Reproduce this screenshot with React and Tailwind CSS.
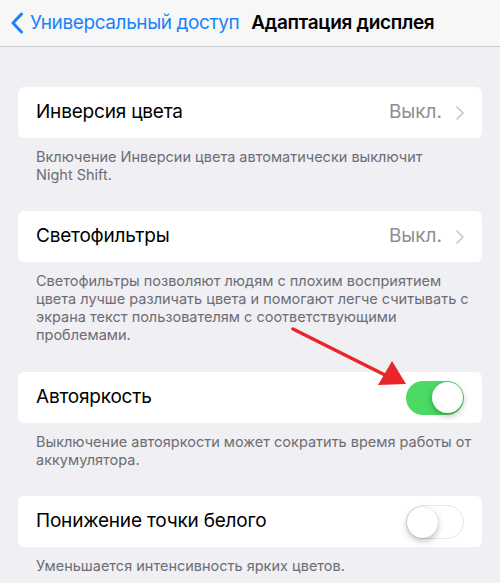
export default function App() {
  const font = { fontFamily: 'Inter, "Noto Sans", sans-serif' }

  const Chevron = () => (
    <svg width="8" height="14" viewBox="0 0 8 14" className="ml-[14px]">
      <path d="M1 1l6 6-6 6" fill="none" stroke="#c7c7cc" strokeWidth="1.6" strokeLinecap="round" strokeLinejoin="round" />
    </svg>
  )

  const Toggle = ({ on }) => (
    <div className={`relative w-[58px] h-[34px] rounded-full ${on ? 'bg-[#4cd964]' : 'bg-white border-[1.5px] border-[#e5e5ea]'}`}>
      <div className={`absolute top-[1.5px] w-[31px] h-[31px] rounded-full bg-white shadow-[0_3px_6px_rgba(0,0,0,0.25),0_0_1px_rgba(0,0,0,0.2)] ${on ? 'right-[1.5px]' : 'left-0'}`} />
    </div>
  )

  const Row = ({ label, value, toggle }) => (
    <div className="mx-[18px] h-[51px] bg-white rounded-[6px] flex items-center pl-[18px] pr-[18px]">
      <span className="flex-1 text-[19px] text-black tracking-[-0.2px]">{label}</span>
      {value && (
        <span className="flex items-center text-[19px] text-[#8e8e93]">
          {value}
          <Chevron />
        </span>
      )}
      {toggle !== undefined && <Toggle on={toggle} />}
    </div>
  )

  const Note = ({ children }) => (
    <p className="pl-[36px] pr-[8px] pt-[10px] text-[14.5px] leading-[18px] text-[#6d6d72] whitespace-nowrap">{children}</p>
  )

  return (
    <div className="relative w-[500px] h-[583px] overflow-hidden bg-[#efeff4]" style={font}>
      <header className="h-[47px] bg-[#f7f7f8] border-b border-[#c8c7cc] flex items-center">
        <svg width="14" height="22" viewBox="0 0 14 22" className="ml-[10px] mr-[6px]">
          <path d="M11.5 2L3 11l8.5 9" fill="none" stroke="#1a82fb" strokeWidth="3" strokeLinecap="round" strokeLinejoin="round" />
        </svg>
        <span className="text-[19px] text-[#1a82fb] tracking-[-0.4px]">Универсальный доступ</span>
        <span className="ml-[12px] text-[19px] font-semibold text-black tracking-[-0.3px]">Адаптация дисплея</span>
      </header>

      <div className="pt-[40px]">
        <Row label="Инверсия цвета" value="Выкл." />
        <Note>
          Включение Инверсии цвета автоматически выключит<br />Night Shift.
        </Note>

        <div className="mt-[27px]">
          <Row label="Светофильтры" value="Выкл." />
        </div>
        <Note>
          Светофильтры позволяют людям с плохим восприятием<br />
          цвета лучше различать цвета и помогают легче считывать с<br />
          экрана текст пользователям с соответствующими<br />
          проблемами.
        </Note>

        <div className="mt-[28px]">
          <Row label="Автояркость" toggle={true} />
        </div>
        <Note>
          Выключение автояркости может сократить время работы от<br />аккумулятора.
        </Note>

        <div className="mt-[27px]">
          <Row label="Понижение точки белого" toggle={false} />
        </div>
        <Note>Уменьшается интенсивность ярких цветов.</Note>
      </div>

      <svg className="absolute left-0 top-0 pointer-events-none" width="500" height="583">
        <line x1="293" y1="329" x2="385" y2="375" stroke="#e8262b" strokeWidth="3.5" strokeLinecap="round" />
        <polygon points="406,384 378,385 392,361" fill="#e8262b" />
      </svg>
    </div>
  )
}
